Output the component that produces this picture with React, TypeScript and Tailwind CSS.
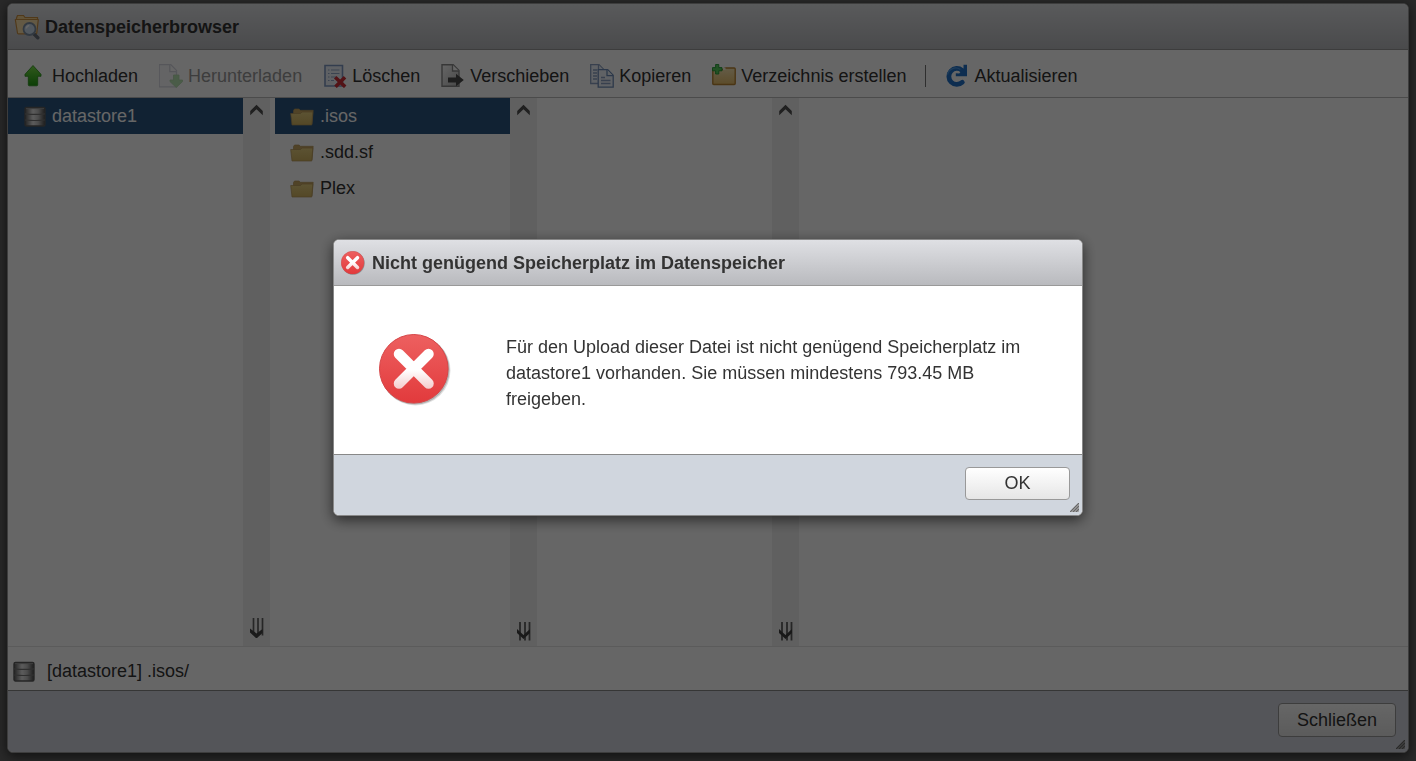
import React, { useState } from "react";

interface IconProps {
    className?: string;
}

function UploadIcon() {
    return (
        <svg viewBox="0 0 24 24" className="size-6 shrink-0" aria-hidden="true">
            <defs>
                <linearGradient id="upload-fill" x1="0" y1="0" x2="0" y2="1">
                    <stop offset="0" stopColor="#7be04a" />
                    <stop offset="1" stopColor="#1e9a10" />
                </linearGradient>
            </defs>
            <path
                d="M10 1.500 18 10.300v2h-3.300v8.500q0 1-1 1H6.300q-1 0-1-1v-8.500H2v-2z"
                fill="url(#upload-fill)"
                stroke="#2a8f1c"
                strokeWidth=".8"
                strokeLinejoin="round"
            />
        </svg>
    );
}

function DownloadIcon() {
    return (
        <svg viewBox="0 0 24 24" className="size-6 shrink-0 opacity-40" aria-hidden="true">
            <path d="M.2.7h11.600L17.500 6.400v16.400H.2z" fill="#f3f4f8" stroke="#9a9fb5" strokeWidth="1.300" />
            <path d="M10.800.7v7h6.700" fill="#fff" stroke="#9a9fb5" strokeWidth="1.300" />
            <path
                d="M14.500 11h5.500v5h3.500v1.600L17.300 23.500 11 17.600V16h3.500z"
                fill="#55c044"
                stroke="#3da032"
                strokeWidth=".8"
                strokeLinejoin="round"
            />
        </svg>
    );
}

function DeleteIcon() {
    return (
        <svg viewBox="0 0 24 24" className="size-6 shrink-0" aria-hidden="true">
            <path d="M2 1.500h17.500v20.500H2z" fill="#edf3fb" stroke="#7f99c2" strokeWidth="1.600" />
            <path
                d="M5 6h1.500M8 6h8.500M5 9.500h1.500M8 9.500h8.500M5 13h1.500M8 13h5M5 16.500h1.500M8 16.500h3"
                stroke="#93a7c8"
                strokeWidth="1.200"
            />
            <path d="m12.200 13.300 10 9.500M22 13.300l-9.500 9.500" stroke="#cf3038" strokeWidth="3.600" />
        </svg>
    );
}

function MoveIcon() {
    return (
        <svg viewBox="0 0 24 24" className="size-6 shrink-0" aria-hidden="true">
            <defs>
                <linearGradient id="move-fill" x1="0" y1="0" x2="1" y2="1">
                    <stop offset="0" stopColor="#fff" />
                    <stop offset="1" stopColor="#b5b5b5" />
                </linearGradient>
            </defs>
            <path d="M1 .8h11.200L18 6.500v15.700H1z" fill="url(#move-fill)" stroke="#8a8a8a" strokeWidth="1.400" />
            <path d="M11.500.8v6.200H18" fill="#fff" stroke="#8a8a8a" strokeWidth="1.300" />
            <path d="M7 13.500h8V9.700l7.800 6.300-7.800 6.300V18.500H7z" fill="#4c4c4c" />
        </svg>
    );
}

function CopyIcon() {
    return (
        <svg viewBox="0 0 24 24" className="size-6 shrink-0" aria-hidden="true">
            <g fill="#f0f5fc" stroke="#8ca1c2" strokeWidth="1.300">
                <path d="M.7.7h8.300l4.500 4.500V19.500H.7z" />
                <path d="M8.500.7v5h5" />
                <path d="M3 6h4M3 9h4M3 12h4M3 15h4" />
                <path d="M8.200 5.700h9.500l5.500 5.500v12H8.200z" stroke="#6f8cb8" />
                <path d="M17 5.700v6h6" stroke="#6f8cb8" />
                <path d="M11 13.500h4M11 16.500h9.500M11 19.500h9.500" />
            </g>
        </svg>
    );
}

function NewFolderIcon() {
    return (
        <svg viewBox="0 0 24 24" className="size-6 shrink-0" aria-hidden="true">
            <defs>
                <linearGradient id="new-folder-fill" x1="0" y1="0" x2="0" y2="1">
                    <stop offset="0" stopColor="#f8e6b4" />
                    <stop offset="1" stopColor="#e6bd68" />
                </linearGradient>
            </defs>
            <path
                d="M.8 5.500h10.200l1.800-1.500h9.400q1 0 1 1v14.500q0 1-1 1H1.800q-1 0-1-1z"
                fill="url(#new-folder-fill)"
                stroke="#b98432"
                strokeWidth="1.400"
                strokeLinejoin="round"
            />
            <path d="M11 3.500h2.500V6H11z" fill="#fdf6e2" />
            <path d="M3.600.5h3.200v3.100H10v3.200H6.800V10H3.600V6.800H.5V3.600h3.100z" fill="#57cc5c" stroke="#239a35" strokeWidth=".9" />
        </svg>
    );
}

function RefreshIcon() {
    return (
        <svg viewBox="0 0 24 24" className="size-6 shrink-0" aria-hidden="true">
            <path
                d="M17 6.300A8 8 0 1 0 17.300 18.300"
                fill="none"
                stroke="#2272c8"
                strokeWidth="4.800"
                strokeLinecap="round"
            />
            <path d="M22 .8v11.500H10.800V9.300l3.400.2L18.500 4.500V.8z" fill="#2272c8" strokeLinejoin="round" />
            <path d="M15.300 5.400A8.400 8.400 0 0 0 2.500 10.500" fill="none" stroke="#4f98e0" strokeWidth="1.200" />
        </svg>
    );
}

function BrowserIcon() {
    return (
        <svg viewBox="0 0 26 26" className="size-[26px] shrink-0" aria-hidden="true">
            <path d="M2.500 4 3.500 1.500h6l1.500 2h12.500v3h-21z" fill="#f3cf8c" stroke="#c98f42" strokeWidth="1.200" />
            <path
                d="M1.300 5.500h23l-1.500 13.500q0 .8-1 .8H4.500q-1 0-1-.8z"
                fill="#f8deaa"
                stroke="#c98f42"
                strokeWidth="1.200"
                strokeLinejoin="round"
            />
            <path d="m19.500 19.500 4.300 4.300" stroke="#686e78" strokeWidth="3.400" strokeLinecap="round" />
            <circle cx="15.500" cy="15" r="6" fill="#cbdced" stroke="#7e90a4" strokeWidth="1.800" />
            <path d="M12.300 14.500a3.500 3.500 0 0 1 3-3" fill="none" stroke="#fff" strokeWidth="1.500" />
        </svg>
    );
}

function DatastoreIcon() {
    return (
        <svg viewBox="0 0 22 22" className="size-[22px] shrink-0" aria-hidden="true">
            <defs>
                <linearGradient id="datastore-fill">
                    <stop offset="0" stopColor="#5a5a5a" />
                    <stop offset=".4" stopColor="#e6e6e6" />
                    <stop offset=".65" stopColor="#c0c0c0" />
                    <stop offset="1" stopColor="#4a4a4a" />
                </linearGradient>
            </defs>
            <rect x="1" y="2.500" width="20" height="18.500" rx="1.500" fill="url(#datastore-fill)" stroke="#5c5c5c" strokeWidth="1.400" />
            <path d="M1 8.800q10 1 20 0M1 15q10 1 20 0" fill="none" stroke="#777" strokeWidth="1.200" />
            <path d="M2 3.600h18" stroke="#999" />
        </svg>
    );
}

function FolderIcon() {
    return (
        <svg viewBox="0 0 24 20" className="h-5 w-6 shrink-0" aria-hidden="true">
            <defs>
                <linearGradient id="folder-fill" x1="0" y1="0" x2="0" y2="1">
                    <stop offset="0" stopColor="#e6cf80" />
                    <stop offset="1" stopColor="#d2b460" />
                </linearGradient>
            </defs>
            <path d="M3.500 8V4.500l1-1.500h4.500l1.500 1.300h12.700L22 18z" fill="#c9a862" stroke="#b5965a" strokeWidth=".7" />
            <path d="M.7 7.500h9.800L12 6h10.800L21.800 19H2z" fill="url(#folder-fill)" stroke="#b5965a" strokeWidth=".7" />
        </svg>
    );
}

function ErrorIcon({ className = "" }: IconProps) {
    return (
        <svg viewBox="0 0 72 72" className={`shrink-0 ${className}`} aria-hidden="true">
            <defs>
                <linearGradient id="error-fill" x1="0" y1="0" x2="0" y2="1">
                    <stop offset="0" stopColor="#ed6060" />
                    <stop offset="1" stopColor="#e23a3c" />
                </linearGradient>
                <linearGradient id="error-cross" gradientUnits="userSpaceOnUse" x1="0" y1="36" x2="0" y2="56">
                    <stop offset="0" stopColor="#fff" />
                    <stop offset="1" stopColor="#f3c9c9" />
                </linearGradient>
            </defs>
            <circle cx="36.500" cy="36.500" r="35" fill="#000" opacity=".12" />
            <circle cx="35.800" cy="35.800" r="34.800" fill="#000" opacity=".2" />
            <circle cx="34.800" cy="34.800" r="34.300" fill="url(#error-fill)" stroke="#d64547" strokeWidth="1" />
            <path d="m20 20 29.500 29.500M49.500 20 20 49.500" stroke="url(#error-cross)" strokeWidth="10.500" strokeLinecap="round" />
        </svg>
    );
}

function ScrollUpIcon() {
    return (
        <svg viewBox="0 0 14 12" className="h-3 w-3.5" aria-hidden="true">
            <path d="M6.500.8 12.800 7v4.200L6.500 5.200.2 11.200V7z" fill="#505050" />
        </svg>
    );
}

function ScrollDownIcon() {
    return (
        <svg viewBox="0 0 14 20" className="h-5 w-3.5" aria-hidden="true">
            <path d="M3.500 0v14M8 0v16M12.500 0v17.500" stroke="#606060" strokeWidth="1.700" />
            <path d="M0 10.500v4l6.500 6 6-5.500v-4l-6 4.500z" fill="#444" />
        </svg>
    );
}

function ScrollEndIcon() {
    return (
        <svg viewBox="0 0 14 20" className="h-5 w-3.5" aria-hidden="true">
            <path d="M3 0v18.500M8 0v18.500M12.500 0v18.500" stroke="#606060" strokeWidth="1.800" />
            <path d="M0 7v4l6.500 6 6.500-6V7l-6.500 6z" fill="#404040" />
        </svg>
    );
}

function ResizeGrip() {
    return (
        <svg viewBox="0 0 9 9" className="absolute right-[3px] bottom-[3px] size-[9px]" aria-hidden="true">
            <path d="M9 0v9H0z" fill="#aaa" />
            <path d="M0 9 9 0M3 9l6-6M6 9l3-3" stroke="#666" strokeWidth="1.200" />
        </svg>
    );
}

const actions = [
    { label: "Hochladen", icon: <UploadIcon /> },
    { label: "Herunterladen", icon: <DownloadIcon />, disabled: true },
    { label: "Löschen", icon: <DeleteIcon /> },
    { label: "Verschieben", icon: <MoveIcon /> },
    { label: "Kopieren", icon: <CopyIcon /> },
    { label: "Verzeichnis erstellen", icon: <NewFolderIcon /> },
];

const folders = [".isos", ".sdd.sf", "Plex"];

interface ColumnProps {
    children?: React.ReactNode;
    end?: boolean;
}

function Column({ children, end = true }: ColumnProps) {
    return (
        <div className="flex w-[262px] shrink-0">
            <div className="grow">{children}</div>
            <div className="flex w-[27px] shrink-0 flex-col items-center justify-between bg-[#f0f0f0] pt-1.5 pb-1">
                <button type="button" aria-label="Nach oben" className="flex">
                    <ScrollUpIcon />
                </button>
                <button type="button" aria-label="Nach unten" className={end ? "flex" : "flex pb-1"}>
                    {end ? <ScrollEndIcon /> : <ScrollDownIcon />}
                </button>
            </div>
        </div>
    );
}

function DatastoreBrowser() {
    const [selected, setSelected] = useState(".isos");

    return (
        <main className="relative flex grow flex-col overflow-hidden rounded-md border border-[#999] bg-white shadow-[0_3px_12px_rgba(0,0,0,0.6)]">
            <header className="flex h-[46px] shrink-0 items-center gap-[5px] border-b border-[#999] bg-linear-to-b from-[#dfe1e4] to-[#b9babe] px-1.5">
                <BrowserIcon />
                <h1 className="text-lg font-bold">Datenspeicherbrowser</h1>
            </header>

            <div className="flex h-12 shrink-0 items-center gap-[21px] border-b border-[#bbb] pt-1 pl-[15px]">
                {actions.map((action) => (
                    <button
                        key={action.label}
                        type="button"
                        disabled={action.disabled}
                        className="flex items-center gap-[5px] whitespace-nowrap disabled:text-[#999]"
                    >
                        {action.icon}
                        {action.label}
                    </button>
                ))}
                <div className="-mx-0.5 h-[22px] w-px bg-[#777]" />
                <button type="button" className="flex items-center gap-[5px]">
                    <RefreshIcon />
                    Aktualisieren
                </button>
            </div>

            <div className="flex grow">
                <div className="mr-[5px] flex">
                    <Column end={false}>
                        <button type="button" className="flex h-9 w-full items-center gap-1.5 bg-[#2b5680] pl-4 text-white">
                            <DatastoreIcon />
                            datastore1
                        </button>
                    </Column>
                </div>
                <Column>
                    {folders.map((name) => (
                        <button
                            key={name}
                            type="button"
                            onClick={() => setSelected(name)}
                            className={`flex h-9 w-full items-center gap-1.5 pl-[15px] ${name === selected ? "bg-[#2b5680] text-white" : ""}`}
                        >
                            <FolderIcon />
                            {name}
                        </button>
                    ))}
                </Column>
                <Column />
            </div>

            <div className="flex h-[45px] shrink-0 items-center gap-3 border-t border-[#e4e4e4] border-b border-b-[#888] pt-1 pl-[5px]">
                <DatastoreIcon />
                [datastore1] .isos/
            </div>

            <footer className="flex h-[61px] shrink-0 items-center justify-end bg-[#d3d5de] px-3 pb-1">
                <button
                    type="button"
                    className="h-[34px] rounded border border-[#999] bg-linear-to-b from-white to-[#e4e4e4] px-[18px]"
                >
                    Schließen
                </button>
            </footer>
            <ResizeGrip />
        </main>
    );
}

interface ErrorDialogProps {
    onClose: () => void;
}

function ErrorDialog({ onClose }: ErrorDialogProps) {
    return (
        <div className="fixed inset-0 flex items-center justify-center bg-black/60 pb-1.5">
            <div
                role="alertdialog"
                aria-labelledby="error-title"
                aria-describedby="error-text"
                className="relative w-full max-w-[750px] overflow-hidden rounded-md border border-[#888] bg-white shadow-[0_4px_14px_rgba(0,0,0,0.6)]"
            >
                <header className="flex h-[46px] items-center gap-[7px] border-b border-[#999] bg-linear-to-b from-[#dfe0e4] to-[#b9babe] px-[7px]">
                    <ErrorIcon className="size-6" />
                    <h2 id="error-title" className="text-lg font-bold">
                        Nicht genügend Speicherplatz im Datenspeicher
                    </h2>
                </header>
                <div className="flex items-start gap-[55px] px-[45px] pt-12 pb-[42px]">
                    <ErrorIcon className="size-[72px]" />
                    <p id="error-text" className="leading-[26px]">
                        Für den Upload dieser Datei ist nicht genügend Speicherplatz im datastore1 vorhanden. Sie müssen
                        mindestens 793.45 MB freigeben.
                    </p>
                </div>
                <footer className="flex h-[61px] items-center justify-end border-t border-[#888] bg-[#d0d6de] px-3 pb-1">
                    <button
                        type="button"
                        onClick={onClose}
                        className="h-[33px] w-[105px] rounded border border-[#999] bg-linear-to-b from-white to-[#e6e6e6]"
                    >
                        OK
                    </button>
                </footer>
                <ResizeGrip />
            </div>
        </div>
    );
}

export default function App() {
    const [open, setOpen] = useState(true);

    return (
        <div className="flex min-h-screen bg-[#666] px-[7px] pt-[3px] pb-2 font-['Liberation_Sans',Arial,sans-serif] text-lg text-[#333]">
            <DatastoreBrowser />
            {open && <ErrorDialog onClose={() => setOpen(false)} />}
        </div>
    );
}
